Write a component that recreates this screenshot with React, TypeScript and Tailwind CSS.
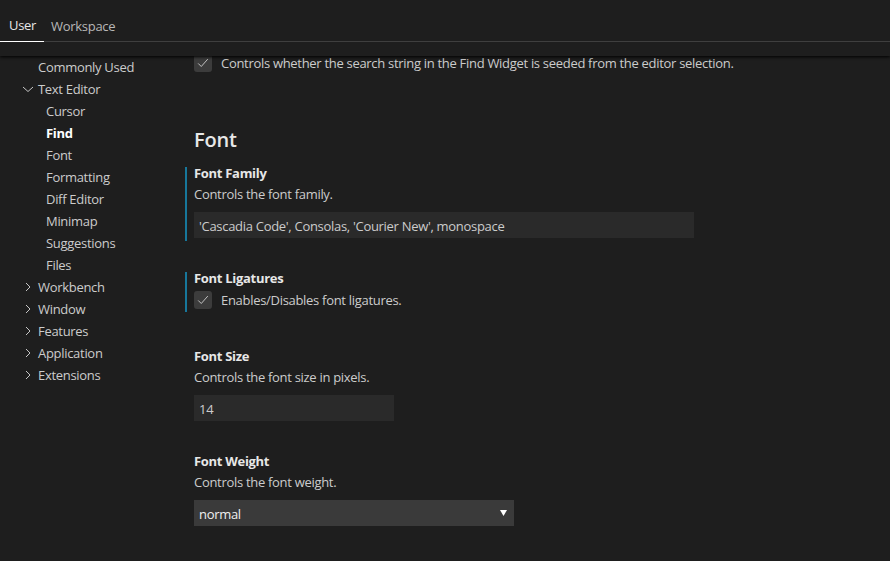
import React from "react";

const font = { fontFamily: "'Open Sans', 'Noto Sans', sans-serif" };

function Check() {
  return (
    <div className="w-[18px] h-[18px] rounded-[3px] bg-[#3c3c3c] flex items-center justify-center shrink-0">
      <svg width="14" height="14" viewBox="0 0 16 16" fill="none">
        <path d="M2.5 8.5 L6 12 L13.5 3.5" stroke="#c5c5c5" strokeWidth="1.1" />
      </svg>
    </div>
  );
}

function ChevronRight() {
  return (
    <svg width="16" height="16" viewBox="0 0 16 16" fill="none" className="shrink-0">
      <path d="M6 4 L10 8 L6 12" stroke="#c5c5c5" strokeWidth="1" />
    </svg>
  );
}
function ChevronDown() {
  return (
    <svg width="16" height="16" viewBox="0 0 16 16" fill="none" className="shrink-0">
      <path d="M3 6 L8 10.5 L13 6" stroke="#c5c5c5" strokeWidth="1" />
    </svg>
  );
}

function TreeItem({ label, level, open, bold }: { label: string; level: 0 | 1; open?: boolean | null; bold?: boolean }) {
  return (
    <div className={`h-[22px] flex items-center ${level === 0 ? "pl-[20px]" : "pl-[46px]"}`}>
      {level === 0 && (
        <div className="w-[18px] flex items-center">
          {open === true ? <ChevronDown /> : open === false ? <ChevronRight /> : null}
        </div>
      )}
      <span className={`text-[13px] leading-[22px] tracking-[-0.3px] ${bold ? "font-bold text-white" : "text-[#cccccc]"}`}>{label}</span>
    </div>
  );
}

export default function App() {
  return (
    <div className="w-[890px] h-[561px] bg-[#1e1e1e] overflow-hidden flex flex-col tracking-[-0.3px]" style={font}>
      {/* header */}
      <div className="relative z-10 bg-[#1e1e1e] shadow-[0_1px_3px_#000]">
        <div className="h-[42px] flex items-end border-b border-[#3f3f3f]">
          <div className="flex items-end -mb-px">
            <div className="pl-[9px] pr-[8px] pb-[7px] border-b border-white text-[13px] leading-[18px] text-[#e7e7e7]">User</div>
            <div className="pl-[7px] pr-[8px] pb-[7px] text-[13px] leading-[18px] text-[#b8b8b8]">Workspace</div>
          </div>
        </div>
        <div className="h-[14px]" />
      </div>

      <div className="flex flex-1 min-h-0">
        {/* sidebar */}
        <div className="w-[185px] shrink-0">
          <TreeItem label="Commonly Used" level={0} open={null} />
          <TreeItem label="Text Editor" level={0} open={true} />
          <TreeItem label="Cursor" level={1} />
          <TreeItem label="Find" level={1} bold />
          <TreeItem label="Font" level={1} />
          <TreeItem label="Formatting" level={1} />
          <TreeItem label="Diff Editor" level={1} />
          <TreeItem label="Minimap" level={1} />
          <TreeItem label="Suggestions" level={1} />
          <TreeItem label="Files" level={1} />
          <TreeItem label="Workbench" level={0} open={false} />
          <TreeItem label="Window" level={0} open={false} />
          <TreeItem label="Features" level={0} open={false} />
          <TreeItem label="Application" level={0} open={false} />
          <TreeItem label="Extensions" level={0} open={false} />
        </div>

        {/* content */}
        <div className="flex-1 flex flex-col">
          <div className="pl-[9px] -mt-[2px] flex items-center gap-[9px] h-[18px]">
            <Check />
            <span className="text-[13px] text-[#cccccc] leading-[18px] -mt-[1px]">
              Controls whether the search string in the Find Widget is seeded from the editor selection.
            </span>
          </div>

          <div className="pl-[9px] mt-[54px] text-[20px] leading-[28px] font-semibold text-[#e7e7e7] tracking-[-0.2px]">Font</div>

          {/* Font Family */}
          <div className="mt-[13px] border-l-2 border-[#17779b] pl-[7px] pb-[3px]">
            <div className="text-[13px] leading-[12px] font-bold text-[#e7e7e7]">Font Family</div>
            <div className="mt-[6px] text-[13px] leading-[18px] text-[#cccccc]">Controls the font family.</div>
            <div className="mt-[9px] w-[500px] h-[26px] bg-[#2a2a2a] flex items-center pt-[3px] pl-[5px] text-[13px] text-[#cccccc]">
              'Cascadia Code', Consolas, 'Courier New', monospace
            </div>
          </div>

          {/* Font Ligatures */}
          <div className="mt-[31px] border-l-2 border-[#17779b] pl-[7px] pb-[3px]">
            <div className="text-[13px] leading-[12px] font-bold text-[#e7e7e7]">Font Ligatures</div>
            <div className="mt-[7px] flex items-center gap-[9px] h-[18px]">
              <Check />
              <span className="text-[13px] leading-[18px] text-[#cccccc]">Enables/Disables font ligatures.</span>
            </div>
          </div>

          {/* Font Size */}
          <div className="mt-[38px] border-l-2 border-transparent pl-[7px] pb-[3px]">
            <div className="text-[13px] leading-[12px] font-bold text-[#e7e7e7]">Font Size</div>
            <div className="mt-[6px] text-[13px] leading-[18px] text-[#cccccc]">Controls the font size in pixels.</div>
            <div className="mt-[9px] w-[200px] h-[26px] bg-[#2a2a2a] flex items-center pt-[3px] pl-[5px] text-[13px] text-[#cccccc]">14</div>
          </div>

          {/* Font Weight */}
          <div className="mt-[31px] border-l-2 border-transparent pl-[7px] pb-[3px]">
            <div className="text-[13px] leading-[12px] font-bold text-[#e7e7e7]">Font Weight</div>
            <div className="mt-[6px] text-[13px] leading-[18px] text-[#cccccc]">Controls the font weight.</div>
            <div className="mt-[9px] w-[320px] h-[26px] bg-[#3a3a3a] flex items-center justify-between pl-[5px] pr-[7px] text-[13px] text-[#f0f0f0]">
              <span className="pt-[3px]">normal</span>
              <svg width="7" height="6" viewBox="0 0 7 6">
                <path d="M0 0 H7 L3.5 6 Z" fill="#ffffff" />
              </svg>
            </div>
          </div>
        </div>
      </div>
    </div>
  );
}
